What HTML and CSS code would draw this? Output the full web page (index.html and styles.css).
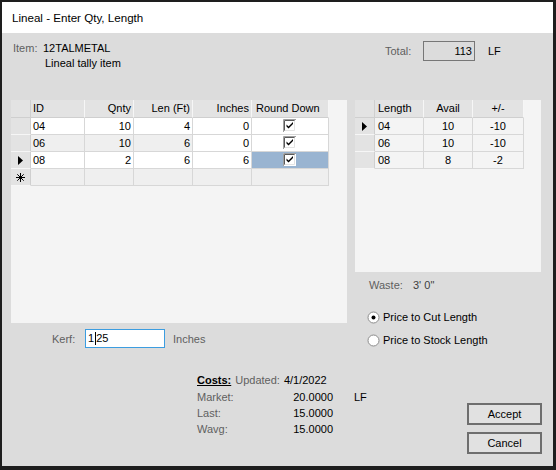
FILE: index.html
```html
<!DOCTYPE html>
<html>
<head>
<meta charset="utf-8">
<title>Lineal - Enter Qty, Length</title>
<link rel="stylesheet" href="styles.css">
</head>
<body>
<div class="window">
  <div class="titlebar">Lineal - Enter Qty, Length</div>
  <div class="client">
    <div class="head">
      <div class="item">
        <span class="lbl">Item:</span><span class="val">12TALMETAL</span>
        <span></span><span class="val desc">Lineal tally item</span>
      </div>
      <div class="total">
        <span class="lbl total-lbl">Total:</span><span class="total-box">113</span><span class="unit">LF</span>
      </div>
    </div>

    <div class="main">
      <div class="col-left">
        <div class="dgv dgv-left">
          <div class="grid grid-left">
            <div class="c h rh"></div>
            <div class="c h">ID</div>
            <div class="c h r">Qnty</div>
            <div class="c h r">Len (Ft)</div>
            <div class="c h r">Inches</div>
            <div class="c h rd">Round Down</div>

            <div class="c rh"></div>
            <div class="c">04</div>
            <div class="c r">10</div>
            <div class="c r">4</div>
            <div class="c r">0</div>
            <div class="c ctr"><svg class="chk" width="13" height="13" viewBox="0 0 13 13"><rect x="0" y="0" width="13" height="13" fill="#fff"/><path d="M0.5 13V0.5H13" fill="none" stroke="#a0a0a0"/><path d="M1.5 12V1.5H12" fill="none" stroke="#5a5a5a"/><path d="M11.5 1.5V11.5H1.5" fill="none" stroke="#e3e3e3"/><path d="M3.5 5.5L3.5 7.5L5.5 9.5L10 5L10 3L5.5 7.5Z" fill="#000"/></svg></div>

            <div class="c rh"></div>
            <div class="c alt">06</div>
            <div class="c alt r">10</div>
            <div class="c alt r">6</div>
            <div class="c r">0</div>
            <div class="c ctr"><svg class="chk" width="13" height="13" viewBox="0 0 13 13"><rect x="0" y="0" width="13" height="13" fill="#fff"/><path d="M0.5 13V0.5H13" fill="none" stroke="#a0a0a0"/><path d="M1.5 12V1.5H12" fill="none" stroke="#5a5a5a"/><path d="M11.5 1.5V11.5H1.5" fill="none" stroke="#e3e3e3"/><path d="M3.5 5.5L3.5 7.5L5.5 9.5L10 5L10 3L5.5 7.5Z" fill="#000"/></svg></div>

            <div class="c rh"><svg width="5" height="9" viewBox="0 0 5 9"><polygon points="0,0 5,4.5 0,9" fill="#000"/></svg></div>
            <div class="c">08</div>
            <div class="c r">2</div>
            <div class="c r">6</div>
            <div class="c r">6</div>
            <div class="c ctr sel"><svg class="chk" width="13" height="13" viewBox="0 0 13 13"><rect x="0" y="0" width="13" height="13" fill="#fff"/><path d="M0.5 13V0.5H13" fill="none" stroke="#a0a0a0"/><path d="M1.5 12V1.5H12" fill="none" stroke="#5a5a5a"/><path d="M11.5 1.5V11.5H1.5" fill="none" stroke="#e3e3e3"/><path d="M3.5 5.5L3.5 7.5L5.5 9.5L10 5L10 3L5.5 7.5Z" fill="#000"/></svg></div>

            <div class="c rh"><svg width="9" height="9" viewBox="0 0 9 9"><path d="M4.5 0V9M0 4.5H9M1.3 1.3L7.7 7.7M7.7 1.3L1.3 7.7" stroke="#000" stroke-width="1"/></svg></div>
            <div class="c newrow"></div>
            <div class="c newrow"></div>
            <div class="c newrow"></div>
            <div class="c newrow"></div>
            <div class="c newrow"></div>
          </div>
        </div>
        <div class="kerf">
          <span class="lbl kerf-lbl">Kerf:</span>
          <div class="kerf-input">1<span class="caret"></span>25</div>
          <span class="lbl kerf-unit">Inches</span>
        </div>
      </div>

      <div class="col-right">
        <div class="dgv dgv-right">
          <div class="grid grid-right">
            <div class="c h rh"></div>
            <div class="c h len">Length</div>
            <div class="c h ctr">Avail</div>
            <div class="c h ctr">+/-</div>

            <div class="c rh"><svg width="5" height="9" viewBox="0 0 5 9"><polygon points="0,0 5,4.5 0,9" fill="#000"/></svg></div>
            <div class="c ro len">04</div>
            <div class="c ro ctr">10</div>
            <div class="c ro ctr">-10</div>

            <div class="c rh"></div>
            <div class="c ro len">06</div>
            <div class="c ro ctr">10</div>
            <div class="c ro ctr">-10</div>

            <div class="c rh"></div>
            <div class="c ro len">08</div>
            <div class="c ro ctr">8</div>
            <div class="c ro ctr">-2</div>
          </div>
        </div>
        <div class="waste">
          <span class="lbl waste-lbl">Waste:</span><span class="waste-val">3' 0"</span>
        </div>
        <div class="radios">
          <div class="radio">
            <svg width="13" height="13" viewBox="0 0 13 13"><circle cx="6.5" cy="6.5" r="5.5" fill="#fff" stroke="#8c8c8c"/><circle cx="6.5" cy="6.5" r="2" fill="#000"/></svg>
            <span>Price to Cut Length</span>
          </div>
          <div class="radio">
            <svg width="13" height="13" viewBox="0 0 13 13"><circle cx="6.5" cy="6.5" r="5.5" fill="#fff" stroke="#8c8c8c"/></svg>
            <span>Price to Stock Length</span>
          </div>
        </div>
      </div>
    </div>

    <div class="bottom">
      <div class="costs">
        <div class="costs-head">
          <span class="costs-title">Costs:</span>
          <span class="lbl">Updated:</span>
          <span class="val">4/1/2022</span>
        </div>
        <span class="lbl">Market:</span><span class="num">20.0000</span><span class="val unit-lf">LF</span>
        <span class="lbl">Last:</span><span class="num">15.0000</span><span></span>
        <span class="lbl">Wavg:</span><span class="num">15.0000</span><span></span>
      </div>
      <div class="buttons">
        <button class="btn">Accept</button>
        <button class="btn">Cancel</button>
      </div>
    </div>
  </div>
</div>
</body>
</html>
```

FILE: styles.css
```css
html, body {
  margin: 0;
  padding: 0;
  background: #000;
}

body {
  font-family: "Liberation Sans", Arial, sans-serif;
  font-size: 11px;
  color: #000;
}

.window {
  width: 556px;
  height: 470px;
  box-sizing: border-box;
  border-style: solid;
  border-color: #1e1e1e;
  border-width: 2px 3px 4px 2px;
  display: flex;
  flex-direction: column;
  background: #dcdcdc;
}

.titlebar {
  height: 31px;
  line-height: 31px;
  background: #fff;
  padding-left: 10px;
  font-size: 11.6px;
  color: #000;
  flex: none;
}

.client {
  flex: 1;
  background: #dcdcdc;
  padding: 0 12px 0 9px;
  display: flex;
  flex-direction: column;
}

.lbl {
  color: #5f5f5f;
}

.val {
  color: #000;
}

/* header */
.head {
  height: 67px;
  display: grid;
  grid-template-columns: 374px auto;
  flex: none;
}

.item {
  display: grid;
  grid-template-columns: 30px auto;
  grid-auto-rows: 15px;
  line-height: 15px;
  padding-top: 8px;
  margin-left: 2px;
  align-content: start;
}

.desc {
  padding-left: 2px;
}

.total {
  display: flex;
  align-items: center;
  padding-top: 8px;
  align-self: start;
}

.total-lbl {
  width: 38px;
}

.total-box {
  width: 52px;
  height: 20px;
  box-sizing: border-box;
  border: 1px solid #777;
  text-align: right;
  padding-right: 2px;
  line-height: 18px;
  color: #000;
}

.unit {
  margin-left: 13px;
}

/* main */
.main {
  display: grid;
  grid-template-columns: 336px 186px;
  column-gap: 8px;
  flex: none;
}

.dgv {
  background: #f4f4f4;
  overflow: hidden;
}

.dgv-left {
  height: 223px;
}

.dgv-right {
  height: 172px;
}

.grid {
  display: grid;
  grid-template-rows: 18px;
  grid-auto-rows: 17px;
}

.grid-left {
  grid-template-columns: 20px 54px 49px 59px 59px 77px;
  width: 318px;
}

.grid-right {
  grid-template-columns: 20px 49px 49px 51px;
  width: 169px;
}

.c {
  box-sizing: border-box;
  border-right: 1px solid #d7d7d7;
  border-bottom: 1px solid #d7d7d7;
  background: #fff;
  padding: 0 2px;
  line-height: 16px;
  white-space: nowrap;
  overflow: hidden;
}

.c.h {
  background: #e3e3e3;
  border-right: 1px solid #f6f6f6;
  border-bottom: 1px solid #cfcfcf;
  line-height: 17px;
}

.c.rh {
  background: #e3e3e3;
  border-right: 1px solid #cfcfcf;
  border-bottom: 1px solid #f6f6f6;
  display: flex;
  align-items: center;
  justify-content: center;
  padding: 0;
}

.c.h.rh {
  border-bottom: 1px solid #cfcfcf;
}

.r {
  text-align: right;
}

.ctr {
  text-align: center;
}

.rd {
  padding-left: 4px;
}

.len {
  padding-left: 3px;
}

.alt {
  background: #efefef;
}

.newrow {
  background: #efefef;
}

.ro {
  background: #f4f4f4;
}

.sel {
  background: #99b4d1;
}

.c.ctr svg.chk {
  display: block;
  margin: 1px auto 0;
  position: relative;
  left: -1px;
}

/* kerf */
.kerf {
  display: flex;
  align-items: center;
  margin-top: 6px;
  height: 19px;
}

.kerf-lbl {
  margin-left: 41px;
  width: 33px;
}

.kerf-input {
  width: 80px;
  height: 19px;
  box-sizing: border-box;
  border: 1px solid #3c9de0;
  background: #fff;
  padding-left: 2px;
  line-height: 17px;
  display: flex;
  align-items: center;
}

.caret {
  display: inline-block;
  width: 1px;
  height: 13px;
  background: #000;
  margin: 0 0.5px;
}

.kerf-unit {
  margin-left: 8px;
}

/* right column */
.waste {
  margin-top: 6px;
  line-height: 14px;
  padding-left: 14px;
  display: flex;
}

.waste-lbl {
  width: 44px;
}

.waste-val {
  color: #404040;
}

.radios {
  margin-top: 17px;
  display: flex;
  flex-direction: column;
  gap: 7px;
}

.radio {
  height: 16px;
  display: flex;
  align-items: center;
  padding-left: 12px;
  gap: 3px;
}

.radio svg {
  display: block;
}

/* bottom */
.bottom {
  margin-top: 25px;
  display: flex;
  flex: none;
}

.costs {
  margin-left: 186px;
  display: grid;
  grid-template-columns: 60px 76px auto;
  grid-auto-rows: 16px;
  line-height: 16px;
  align-content: start;
}

.costs-head {
  grid-column: 1 / 4;
  display: flex;
  gap: 4px;
  height: 15px;
  line-height: 15px;
}

.costs-title {
  font-weight: bold;
  text-decoration: underline;
  color: #000;
}

.num {
  text-align: right;
  color: #000;
}

.unit-lf {
  padding-left: 21px;
}

.buttons {
  margin-left: auto;
  margin-right: -1px;
  padding-top: 30px;
  display: flex;
  flex-direction: column;
  gap: 7px;
}

.btn {
  width: 75px;
  height: 22px;
  box-sizing: border-box;
  border: 2px solid #6e6e6e;
  background: #e1e1e1;
  font-family: "Liberation Sans", Arial, sans-serif;
  font-size: 11px;
  color: #000;
  padding: 0;
}
```
